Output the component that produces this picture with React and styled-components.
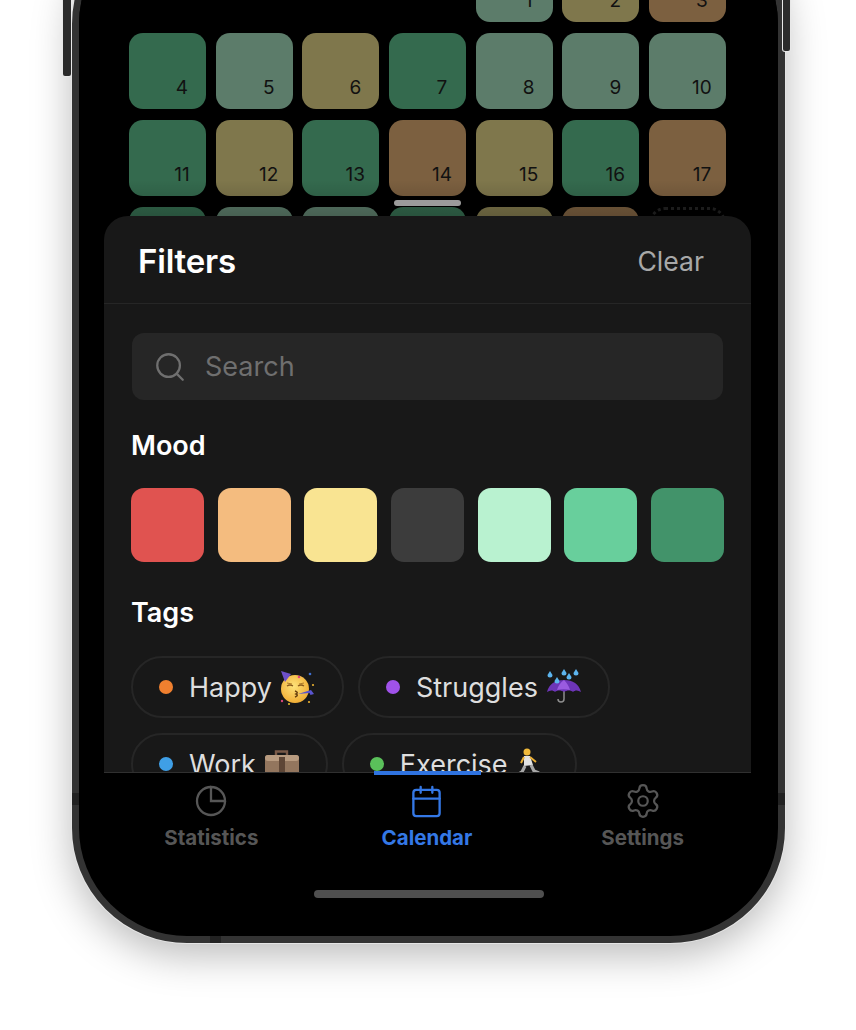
import React from 'react';
import styled, { createGlobalStyle } from 'styled-components';
import { Calendar as CalendarIcon, Search, Settings } from 'lucide-react';

const GlobalStyle = createGlobalStyle`
  html, body {
    margin: 0;
    padding: 0;
    background: #fff;
    font-family: Inter, "Liberation Sans", sans-serif;
  }
`;

const Page = styled.div`
  display: flex;
  flex-direction: column;
  justify-content: flex-end;
  align-items: flex-start;
  box-sizing: border-box;
  width: 856px;
  height: 1030px;
  padding: 0 0 87px 72px;
  overflow: hidden;
  background: #fff;
`;

const Phone = styled.div`
  position: relative;
  flex: none;
  width: 713px;
  box-sizing: border-box;
  border: 7px solid #333;
  border-radius: 115px;
  background: #000;
  box-shadow: 0 0 0 1px #e4e4e4, 0 12px 40px rgba(0, 0, 0, 0.28);
`;

const SideButton = styled.div`
  position: absolute;
  ${p => p.side}: ${p => p.offset}px;
  bottom: ${p => p.bottom}px;
  width: ${p => p.width}px;
  height: 220px;
  background: #2b2b2b;
  border-radius: 2px;
  box-shadow: 0 0 0 1px #e8e8e8;
`;

const AntennaBand = styled.div`
  position: absolute;
  ${p => p.side}: ${p => p.offset}px;
  bottom: ${p => p.bottom}px;
  width: ${p => p.width}px;
  height: ${p => p.height}px;
  background: #222;
`;

const Screen = styled.div`
  display: flex;
  flex-direction: column;
  border-radius: 108px;
  overflow: hidden;
`;

const CalendarArea = styled.div`
  position: relative;
  height: 300px;
  box-sizing: border-box;
  padding: 30px 0 0 50px;
  overflow: hidden;
  background: #000;
`;

const DayGrid = styled.div`
  display: grid;
  grid-template-columns: repeat(7, 77px);
  grid-auto-rows: 76px;
  column-gap: 9.67px;
  row-gap: 11px;
`;

const toneColors = {
  green: '#346a4e',
  sage: '#5c7c6a',
  olive: '#7f774c',
  brown: '#7c6040'
};

const DayCell = styled.div`
  display: flex;
  align-items: flex-end;
  justify-content: flex-end;
  box-sizing: border-box;
  padding: 0 10px 10px 0;
  border-radius: 14px;
  background: ${p => toneColors[p.tone]};
`;

const EmptyCell = styled.div``;

const TodayCell = styled.div`
  border: 3px dotted #222;
  border-radius: 16px;
`;

const DayNumber = styled.span`
  width: 28px;
  text-align: center;
  font-size: 19px;
  line-height: 23px;
  color: #111;
`;

const Dimmer = styled.div`
  position: absolute;
  left: 0;
  right: 0;
  bottom: 0;
  height: 36px;
  background: linear-gradient(rgba(0, 0, 0, 0), rgba(0, 0, 0, 0.22));
`;

const Handle = styled.div`
  position: absolute;
  left: 315px;
  bottom: 10px;
  width: 67px;
  height: 6px;
  border-radius: 3px;
  background: #9b9b9b;
`;

const Sheet = styled.section`
  height: 556px;
  margin: 0 27px 0 25px;
  overflow: hidden;
  background: #181818;
  border-radius: 24px 24px 0 0;
  border-bottom: 1px solid #303030;
`;

const SheetHeader = styled.header`
  display: flex;
  align-items: center;
  justify-content: space-between;
  box-sizing: border-box;
  height: 88px;
  padding: 2px 47px 0 34px;
  border-bottom: 1px solid #262626;
`;

const SheetTitle = styled.h2`
  margin: 0;
  font-size: 33px;
  font-weight: 600;
  color: #fff;
  letter-spacing: -0.2px;
`;

const ClearButton = styled.span`
  font-size: 26.6px;
  color: #a8a8a8;
`;

const SheetBody = styled.div`
  padding: 29px 27px 0;
`;

const SearchBox = styled.div`
  display: flex;
  align-items: center;
  gap: 18px;
  height: 67px;
  margin: 0 1px;
  padding-left: 21px;
  box-sizing: border-box;
  background: #262626;
  border-radius: 12px;
  color: #6f6f6f;
  font-size: 27px;
`;

const SectionTitle = styled.h3`
  margin: ${p => p.top}px 0 0;
  font-size: 27px;
  line-height: 32px;
  font-weight: 600;
  color: #fff;
`;

const MoodRow = styled.div`
  display: flex;
  justify-content: space-between;
  margin-top: 26px;
`;

const MoodSwatch = styled.div`
  width: 73px;
  height: 74px;
  border-radius: 13px;
  background: ${p => p.color};
`;

const TagList = styled.div`
  display: flex;
  flex-wrap: wrap;
  gap: 15px 14px;
  margin-top: 27px;
`;

const TagChip = styled.div`
  display: flex;
  align-items: center;
  box-sizing: border-box;
  height: 62px;
  padding: 0 26px 0 26px;
  border: 2px solid #262626;
  border-radius: 31px;
  font-size: 27px;
  color: #dedede;
`;

const TagDot = styled.span`
  width: 14px;
  height: 14px;
  margin-right: 16px;
  border-radius: 50%;
  background: ${p => p.color};
`;

const TagEmoji = styled.svg`
  display: block;
  flex: none;
  margin-left: 8px;
`;

const TabBar = styled.nav`
  display: grid;
  grid-template-columns: repeat(3, 1fr);
  height: 117px;
  margin: 0 27.5px 0 24.5px;
`;

const Tab = styled.div`
  position: relative;
  display: flex;
  flex-direction: column;
  align-items: center;
  padding-top: 9px;
  color: ${p => (p.active ? '#3478e6' : '#565656')};
  font-size: 20.5px;
  font-weight: 700;
`;

const ActiveLine = styled.div`
  position: absolute;
  top: -2px;
  left: 50%;
  width: 107px;
  height: 4px;
  margin-left: -53px;
  background: #2f73e0;
`;

const IconSlot = styled.div`
  display: flex;
  align-items: center;
  justify-content: center;
  height: 38px;
`;

const TabLabel = styled.span`
  margin-top: 6px;
  line-height: 24px;
`;

const HomeBarRow = styled.div`
  display: flex;
  justify-content: center;
  padding: 0 0 38px;
`;

const HomeBar = styled.div`
  width: 230px;
  height: 8px;
  border-radius: 4px;
  background: #4f4f4f;
`;

const weeks = [
  [null, null, null, null, 'sage', 'olive', 'brown'],
  ['green', 'sage', 'olive', 'green', 'sage', 'sage', 'sage'],
  ['green', 'olive', 'green', 'brown', 'olive', 'green', 'brown'],
  ['green', 'sage', 'sage', 'green', 'olive', 'brown', 'today']
];

const moods = ['#e05350', '#f4bc7f', '#f9e492', '#3c3c3c', '#b9f2d0', '#68cf9c', '#42936a'];

function PartyFace() {
  return (
    <TagEmoji width="36" height="36" viewBox="0 0 36 36">
      <defs>
        <radialGradient id="partyFace" cx="0.45" cy="0.4" r="0.65">
          <stop offset="0" stopColor="#fde27a" />
          <stop offset="1" stopColor="#f0aa30" />
        </radialGradient>
      </defs>
      <circle cx="15" cy="20" r="14" fill="url(#partyFace)" />
      <path d="M1 2l10 3-6 8z" fill="#6d4fc8" />
      <path d="M7 17q3-2 6 0M18 17q3-2 6 0" stroke="#8a5a1c" strokeWidth="1.300" fill="none" />
      <path d="M7 14l5 1M24 14l-5 1" stroke="#b07a28" strokeWidth="1" fill="none" />
      <path d="M15 22q4 1.500 1 3 3 1.500-1 3" stroke="#6b4310" strokeWidth="1.500" fill="none" />
      <path d="M18 25l13-4 3 4-3.500 1-1-2z" fill="#5a55d0" />
      <circle cx="19" cy="8" r="1.300" fill="#e0457b" />
      <circle cx="30" cy="5" r="1.300" fill="#3f6fd0" />
      <circle cx="33" cy="16" r="1.100" fill="#e8b030" />
      <circle cx="2" cy="32" r="1.200" fill="#d8467a" />
      <circle cx="9" cy="35" r="1" fill="#e8c030" />
      <circle cx="29" cy="33" r="1.100" fill="#e8b030" />
    </TagEmoji>
  );
}

function RainUmbrella() {
  return (
    <TagEmoji width="36" height="36" viewBox="0 0 36 36">
      <path d="M18 20v10a3 3 0 0 1-6 0" stroke="#8d8d8d" strokeWidth="1.500" fill="none" />
      <path d="M1 23c2-8 8-12 17-12s15 4 17 12c-3-2-6-2-8 0-2-2-6-2-9 0-3-2-7-2-9 0-2-2-5-2-8 0z" fill="#6d35b8" />
      <path d="M11 21c1-4 3-7 7-10 3 3 5 6 6 10-4-1-9-1-13 0z" fill="#9a5be0" />
      <path d="M4 2l2.500 4a2.500 2.500 0 1 1-5 0zM18 0l2.500 4a2.500 2.500 0 1 1-5 0zM30 0l2.500 4a2.500 2.500 0 1 1-5 0zM23 4l2.500 4a2.500 2.500 0 1 1-5 0zM11 8l2.500 4a2.500 2.500 0 1 1-5 0z" fill="#5cb4ee" />
    </TagEmoji>
  );
}

function Briefcase() {
  return (
    <TagEmoji width="36" height="36" viewBox="0 0 36 36">
      <path d="M12 9V5.500h11V9" stroke="#7a5a48" strokeWidth="2.400" fill="none" />
      <rect x="1" y="9" width="34" height="24" rx="3" fill="#93765e" />
      <rect x="1" y="9" width="34" height="6" rx="3" fill="#b89b80" />
      <rect x="15" y="11" width="6" height="16" fill="#5e4636" />
    </TagEmoji>
  );
}

function Runner() {
  return (
    <TagEmoji width="33" height="36" viewBox="2 0 33 36">
      <circle cx="13" cy="6" r="3.500" fill="#f0b93a" />
      <path d="M10 10h6l3 9-9 1z" fill="#e2e2e2" />
      <path d="M10 11l-3 6M16 11l6 5" stroke="#e8ae36" strokeWidth="2" fill="none" />
      <path d="M11 20l-3 6-2 1M17 19l3 6 5 2" stroke="#a8a8a8" strokeWidth="3.200" fill="none" />
      <path d="M4 29l4-2M25 28l3 1" stroke="#e8ae36" strokeWidth="2.400" fill="none" />
    </TagEmoji>
  );
}

function PieIcon() {
  return (
    <svg width="34" height="34" viewBox="0 0 34 34" fill="none" stroke="currentColor" strokeWidth="2.300">
      <path d="M17 3a14 14 0 1 0 14 14" />
      <path d="M17 3a14 14 0 0 1 14 14H17z" />
    </svg>
  );
}

const tags = [
  { label: 'Happy', color: '#f0802f', Emoji: PartyFace },
  { label: 'Struggles', color: '#a052ea', Emoji: RainUmbrella },
  { label: 'Work', color: '#3f9fe6', Emoji: Briefcase },
  { label: 'Exercise', color: '#5ac05a', Emoji: Runner }
];

function Days() {
  let day = 0;
  return (
    <DayGrid>
      {weeks.flat().map((tone, i) => {
        if (!tone) return <EmptyCell key={i} />;
        day += 1;
        if (tone === 'today') return <TodayCell key={i} />;
        // the last row sits behind the sheet, its numbers never show
        return (
          <DayCell key={i} tone={tone}>
            {day < 18 && <DayNumber>{day}</DayNumber>}
          </DayCell>
        );
      })}
    </DayGrid>
  );
}

export default function App() {
  return (
    <Page>
      <GlobalStyle />
      <Phone>
        <SideButton side="left" offset={-16} width={8} bottom={860} />
        <SideButton side="right" offset={-12} width={7} bottom={885} />
        <AntennaBand side="left" offset={-7} width={7} height={12} bottom={131} />
        <AntennaBand side="right" offset={-7} width={7} height={12} bottom={131} />
        <AntennaBand side="left" offset={131} width={11} height={7} bottom={-7} />
        <Screen>
          <CalendarArea>
            <Days />
            <Dimmer />
            <Handle />
          </CalendarArea>
          <Sheet>
            <SheetHeader>
              <SheetTitle>Filters</SheetTitle>
              <ClearButton>Clear</ClearButton>
            </SheetHeader>
            <SheetBody>
              <SearchBox>
                <Search size={34} strokeWidth={1.6} />
                <span>Search</span>
              </SearchBox>
              <SectionTitle top={30}>Mood</SectionTitle>
              <MoodRow>
                {moods.map(color => (
                  <MoodSwatch key={color} color={color} />
                ))}
              </MoodRow>
              <SectionTitle top={35}>Tags</SectionTitle>
              <TagList>
                {tags.map(({ label, color, Emoji }) => (
                  <TagChip key={label}>
                    <TagDot color={color} />
                    {label}
                    <Emoji />
                  </TagChip>
                ))}
              </TagList>
            </SheetBody>
          </Sheet>
          <TabBar>
            <Tab>
              <IconSlot>
                <PieIcon />
              </IconSlot>
              <TabLabel>Statistics</TabLabel>
            </Tab>
            <Tab active>
              <ActiveLine />
              <IconSlot>
                <CalendarIcon size={35} strokeWidth={1.6} />
              </IconSlot>
              <TabLabel>Calendar</TabLabel>
            </Tab>
            <Tab>
              <IconSlot>
                <Settings size={38} strokeWidth={1.4} />
              </IconSlot>
              <TabLabel>Settings</TabLabel>
            </Tab>
          </TabBar>
          <HomeBarRow>
            <HomeBar />
          </HomeBarRow>
        </Screen>
      </Phone>
    </Page>
  );
}
